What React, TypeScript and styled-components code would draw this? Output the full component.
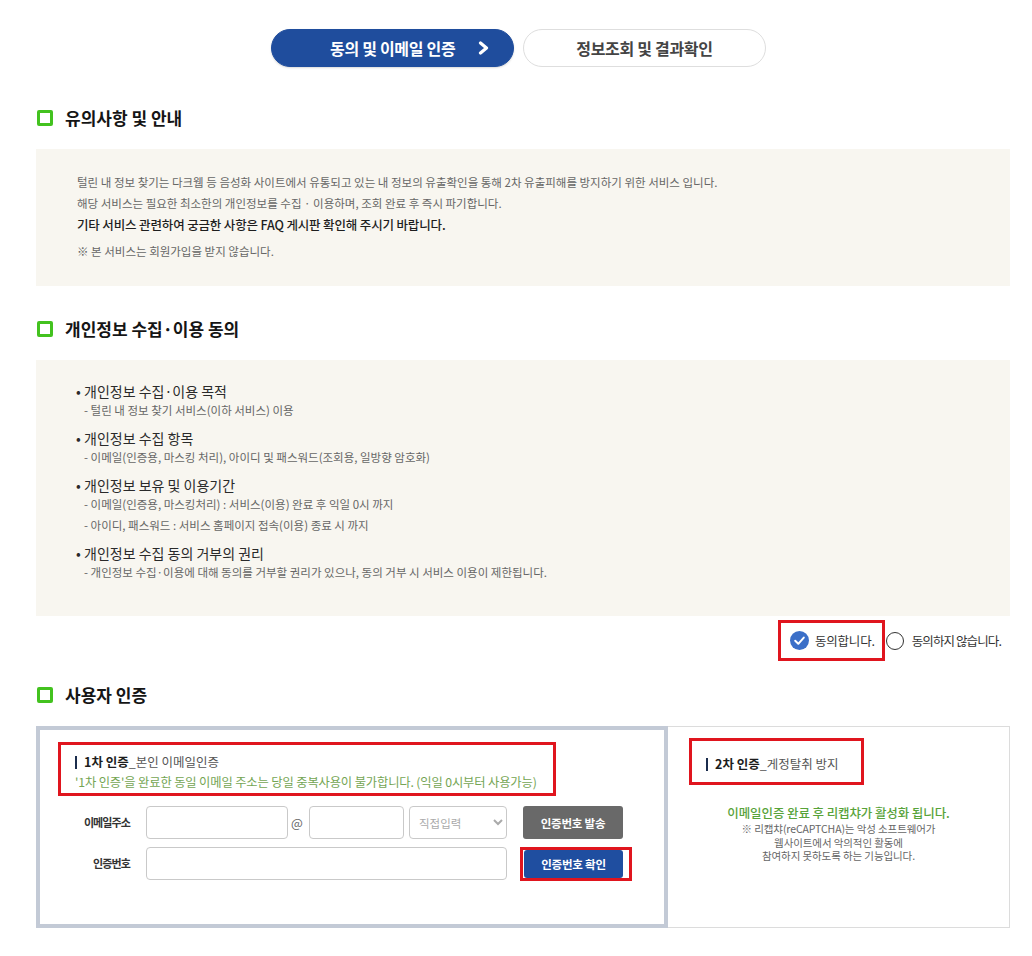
import React from 'react';
import styled, { createGlobalStyle } from 'styled-components';

const GlobalStyle = createGlobalStyle`
  html, body { margin: 0; padding: 0; background: #fff; }
  body { font-family: "Noto Sans CJK KR", "Noto Sans", sans-serif; color: #333; }
  * { box-sizing: border-box; }
`;

const Page = styled.div`
  width: 1032px;
  padding: 29px 22px 30px 36px;
`;

const Steps = styled.div`
  display: flex;
  gap: 9px;
  padding-left: 235px;
`;

const Step = styled.div<{ $active?: boolean }>`
  width: 243px;
  height: 38px;
  border-radius: 19px;
  display: flex;
  align-items: center;
  justify-content: ${p => (p.$active ? 'space-between' : 'center')};
  padding: ${p => (p.$active ? '0 24px 0 58px' : '0')};
  font-size: 16px;
  font-weight: 700;
  letter-spacing: -0.3px;
  background: ${p => (p.$active ? '#1f4d9d' : '#fff')};
  color: ${p => (p.$active ? '#fff' : '#444')};
  border: 1px solid ${p => (p.$active ? '#1f4d9d' : '#dedede')};
  box-shadow: ${p => (p.$active ? '0 1px 2px rgba(0,0,0,0.15)' : 'none')};
`;

const SectionTitle = styled.h2<{ $mt: number }>`
  margin: ${p => p.$mt}px 0 20px;
  padding-left: 1px;
  display: flex;
  align-items: center;
  gap: 12px;
  font-size: 17px;
  line-height: 22px;
  font-weight: 700;
  color: #151515;
`;

const GreenBox = styled.span`
  width: 16px;
  height: 16px;
  border: 3px solid #43c21f;
  border-radius: 2px;
  flex: none;
`;

const InfoBox = styled.div`
  background: #f8f6f0;
  padding: 23px 41px 24px;
`;

const InfoLine = styled.p<{ $strong?: boolean; $note?: boolean }>`
  margin: ${p => (p.$note ? '6px 0 0' : '0')};
  font-size: ${p => (p.$strong ? '12.5px' : '11.5px')};
  font-weight: ${p => (p.$strong ? 500 : 400)};
  color: ${p => (p.$strong ? '#1e1e1e' : '#666')};
  line-height: 21px;
  letter-spacing: ${p => (p.$strong ? '-0.15px' : '0')};
`;

const PolicyBox = styled.div`
  background: #f8f6f0;
  padding: 22px 40px 33px;
  display: flex;
  flex-direction: column;
  gap: 8px;
`;

const PolicyItem = styled.div`
  display: flex;
  flex-direction: column;
`;

const PolicyHead = styled.div`
  display: flex;
  font-size: 14px;
  line-height: 18px;
  color: #2a2a2a;
`;

const Bullet = styled.span`
  width: 8px;
  flex: none;
`;

const PolicySub = styled.div`
  padding-left: 8px;
  font-size: 11.5px;
  line-height: 21px;
  color: #666;
`;

const ConsentRow = styled.div`
  margin-top: 4px;
  height: 41px;
  display: flex;
  justify-content: flex-end;
  align-items: center;
  padding-right: 9px;
`;

const MarkBox = styled.div`
  border: 3px solid #e0151e;
`;

const ConsentMark = styled(MarkBox)`
  height: 41px;
  display: flex;
  align-items: center;
  padding: 0 7px 0 9px;
`;

const RadioOption = styled.label<{ $gap: number }>`
  display: flex;
  align-items: center;
  gap: ${p => p.$gap}px;
`;

const EmptyRadio = styled.span`
  width: 18px;
  height: 18px;
  border-radius: 50%;
  border: 1.3px solid #333;
  background: #fff;
  margin-left: 1px;
`;

const RadioText = styled.span<{ $tight?: boolean }>`
  font-size: 12.5px;
  color: #333;
  letter-spacing: ${p => (p.$tight ? '-0.9px' : '-0.2px')};
`;

const AuthBox = styled.div`
  display: flex;
  height: 202px;
`;

const LeftPanel = styled.div`
  width: 632px;
  border: 4px solid #c3cad6;
  padding-top: 12px;
`;

const RightPanel = styled.div`
  flex: 1;
  border: 1px solid #dcdcdc;
  border-left: none;
  padding-top: 11px;
  display: flex;
  flex-direction: column;
`;

const StepMark = styled(MarkBox)<{ $w: number; $h: number }>`
  width: ${p => p.$w}px;
  height: ${p => p.$h}px;
  padding: 8px 8px 0 14px;
  display: flex;
  flex-direction: column;
  gap: 2px;
`;

const StepMarkLeft = styled(StepMark)`
  margin-left: 18px;
`;

const StepMarkRight = styled(StepMark)`
  margin-left: 21px;
  padding-top: 14px;
`;

const StepHead = styled.div`
  display: flex;
  align-items: center;
  font-size: 12.5px;
  line-height: 18px;
  color: #555;
`;

const StepBar = styled.span`
  width: 2px;
  height: 13px;
  background: #1b2d4d;
  margin-right: 7px;
`;

const StepStrong = styled.strong`
  color: #1c1c1c;
  font-weight: 700;
`;

const StepNote = styled.div`
  font-size: 12.3px;
  line-height: 18px;
  color: #74a553;
  letter-spacing: -0.15px;
  white-space: nowrap;
`;

const Form = styled.div`
  display: grid;
  grid-template-columns: 90px 361px auto;
  column-gap: 16px;
  row-gap: 8px;
  margin-top: 10px;
  align-items: start;
`;

const FieldLabel = styled.div`
  height: 33px;
  line-height: 33px;
  text-align: right;
  font-size: 11px;
  font-weight: 700;
  color: #333;
  letter-spacing: -0.9px;
`;

const FieldGroup = styled.div`
  display: flex;
  align-items: center;
`;

const TextInput = styled.input<{ $w: number }>`
  width: ${p => p.$w}px;
  height: 33px;
  border: 1px solid #c9c9c9;
  border-radius: 4px;
  background: #fff;
  outline: none;
  padding: 0 8px;
`;

const AtSign = styled.span`
  width: 21px;
  text-align: center;
  font-size: 12.5px;
  color: #666;
  padding-right: 3px;
`;

const DomainSelect = styled.select`
  width: 98px;
  height: 33px;
  margin-left: 5px;
  border: 1px solid #c9c9c9;
  border-radius: 4px;
  background: #fff;
  color: #aaa;
  font-family: "Noto Sans CJK KR", sans-serif;
  font-size: 11.5px;
  padding-left: 5px;
  outline: none;
`;

const ActionButton = styled.button<{ $blue?: boolean }>`
  width: ${p => (p.$blue ? '99px' : '100px')};
  height: ${p => (p.$blue ? '28px' : '33px')};
  border: none;
  border-radius: 3px;
  background: ${p => (p.$blue ? '#1f4ea0' : '#696969')};
  color: #fff;
  font-family: "Noto Sans CJK KR", sans-serif;
  font-size: 11.5px;
  font-weight: 700;
  letter-spacing: -0.2px;
  padding: 0;
`;

const ButtonMark = styled(MarkBox)`
  margin-left: -3px;
  width: 112px;
  height: 34px;
  padding: 0 0 0 1px;
`;

const CaptchaNote = styled.div`
  margin-top: 20px;
  text-align: center;
`;

const CaptchaLead = styled.p`
  margin: 0;
  font-size: 12.5px;
  line-height: 16px;
  color: #58a33a;
  font-weight: 500;
  letter-spacing: -0.1px;
`;

const CaptchaDesc = styled.p`
  margin: 1px 0 0;
  font-size: 10.5px;
  line-height: 13.5px;
  color: #666;
  letter-spacing: -0.1px;
`;

const Chevron = () => (
  <svg width="11" height="14" viewBox="0 0 11 14">
    <polyline points="2.5,2 8.5,7 2.5,12" fill="none" stroke="#fff" strokeWidth="3.2" strokeLinecap="round" strokeLinejoin="round" />
  </svg>
);

const CheckedRadio = () => (
  <svg width="19" height="19" viewBox="0 0 19 19">
    <circle cx="9.5" cy="9.5" r="9.5" fill="#3b6fc8" />
    <polyline points="5.2,9.8 8.3,12.8 13.8,6.6" fill="none" stroke="#fff" strokeWidth="2" strokeLinecap="round" strokeLinejoin="round" />
  </svg>
);

const policies: { head: string; subs: string[] }[] = [
  { head: '개인정보 수집·이용 목적', subs: ['- 털린 내 정보 찾기 서비스(이하 서비스) 이용'] },
  { head: '개인정보 수집 항목', subs: ['- 이메일(인증용, 마스킹 처리), 아이디 및 패스워드(조회용, 일방향 암호화)'] },
  {
    head: '개인정보 보유 및 이용기간',
    subs: ['- 이메일(인증용, 마스킹처리) : 서비스(이용) 완료 후 익일 0시 까지', '- 아이디, 패스워드 : 서비스 홈페이지 접속(이용) 종료 시 까지'],
  },
  { head: '개인정보 수집 동의 거부의 권리', subs: ['- 개인정보 수집·이용에 대해 동의를 거부할 권리가 있으나, 동의 거부 시 서비스 이용이 제한됩니다.'] },
];

export default function App() {
  return (
    <>
      <GlobalStyle />
      <Page>
        <Steps>
          <Step $active>
            <span>동의 및 이메일 인증</span>
            <Chevron />
          </Step>
          <Step>정보조회 및 결과확인</Step>
        </Steps>

        <SectionTitle $mt={40}>
          <GreenBox />
          유의사항 및 안내
        </SectionTitle>
        <InfoBox>
          <InfoLine>털린 내 정보 찾기는 다크웹 등 음성화 사이트에서 유통되고 있는 내 정보의 유출확인을 통해 2차 유출피해를 방지하기 위한 서비스 입니다.</InfoLine>
          <InfoLine>해당 서비스는 필요한 최소한의 개인정보를 수집 · 이용하며, 조회 완료 후 즉시 파기합니다.</InfoLine>
          <InfoLine $strong>기타 서비스 관련하여 궁금한 사항은 FAQ 게시판 확인해 주시기 바랍니다.</InfoLine>
          <InfoLine $note>※ 본 서비스는 회원가입을 받지 않습니다.</InfoLine>
        </InfoBox>

        <SectionTitle $mt={32}>
          <GreenBox />
          개인정보 수집·이용 동의
        </SectionTitle>
        <PolicyBox>
          {policies.map(p => (
            <PolicyItem key={p.head}>
              <PolicyHead>
                <Bullet>•</Bullet>
                {p.head}
              </PolicyHead>
              {p.subs.map(s => (
                <PolicySub key={s}>{s}</PolicySub>
              ))}
            </PolicyItem>
          ))}
        </PolicyBox>

        <ConsentRow>
          <ConsentMark>
            <RadioOption $gap={6}>
              <CheckedRadio />
              <RadioText>동의합니다.</RadioText>
            </RadioOption>
          </ConsentMark>
          <RadioOption $gap={8}>
            <EmptyRadio />
            <RadioText $tight>동의하지 않습니다.</RadioText>
          </RadioOption>
        </ConsentRow>

        <SectionTitle $mt={23}>
          <GreenBox />
          사용자 인증
        </SectionTitle>
        <AuthBox>
          <LeftPanel>
            <StepMarkLeft $w={498} $h={54}>
              <StepHead>
                <StepBar />
                <StepStrong>1차 인증</StepStrong>_본인 이메일인증
              </StepHead>
              <StepNote>'1차 인증'을 완료한 동일 이메일 주소는 당일 중복사용이 불가합니다. (익일 0시부터 사용가능)</StepNote>
            </StepMarkLeft>
            <Form>
              <FieldLabel>이메일주소</FieldLabel>
              <FieldGroup>
                <TextInput $w={142} />
                <AtSign>@</AtSign>
                <TextInput $w={95} />
                <DomainSelect defaultValue="direct">
                  <option value="direct">직접입력</option>
                </DomainSelect>
              </FieldGroup>
              <ActionButton>인증번호 발송</ActionButton>
              <FieldLabel>인증번호</FieldLabel>
              <FieldGroup>
                <TextInput $w={361} />
              </FieldGroup>
              <ButtonMark>
                <ActionButton $blue>인증번호 확인</ActionButton>
              </ButtonMark>
            </Form>
          </LeftPanel>
          <RightPanel>
            <StepMarkRight $w={175} $h={47}>
              <StepHead>
                <StepBar />
                <StepStrong>2차 인증</StepStrong>_게정탈취 방지
              </StepHead>
            </StepMarkRight>
            <CaptchaNote>
              <CaptchaLead>이메일인증 완료 후 리캡챠가 활성화 됩니다.</CaptchaLead>
              <CaptchaDesc>
                ※ 리캡챠(reCAPTCHA)는 악성 소프트웨어가
                <br />
                웹사이트에서 악의적인 활동에
                <br />
                참여하지 못하도록 하는 기능입니다.
              </CaptchaDesc>
            </CaptchaNote>
          </RightPanel>
        </AuthBox>
      </Page>
    </>
  );
}
